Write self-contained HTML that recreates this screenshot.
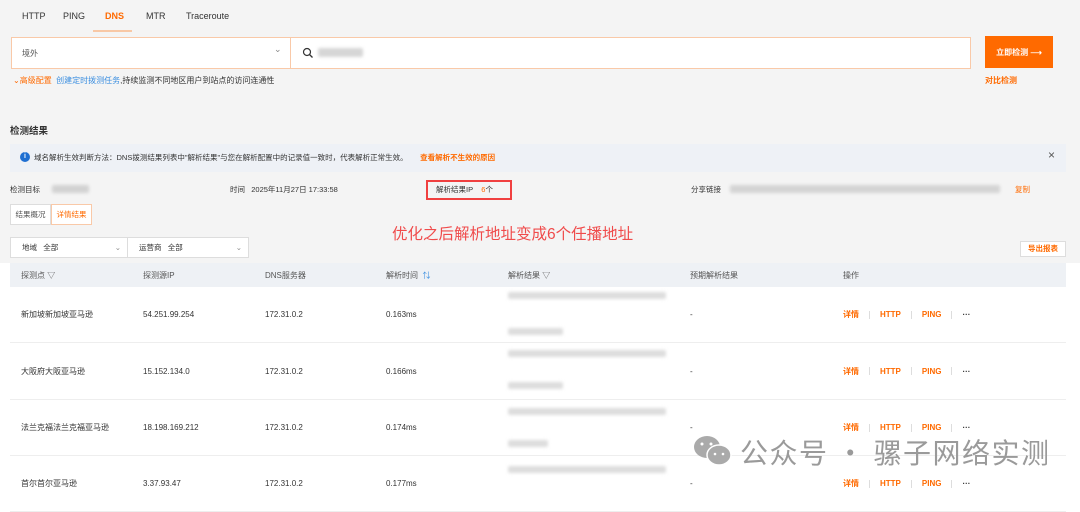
<!DOCTYPE html>
<html><head><meta charset="utf-8"><style>
*{margin:0;padding:0;box-sizing:border-box}
body{width:1080px;height:493px;overflow:hidden;background:#fff;font-family:"Liberation Sans","Noto Sans CJK SC",sans-serif;font-size:8px;color:#333;position:relative}
.a{position:absolute;white-space:nowrap}
.top{position:absolute;left:0;top:0;width:1080px;height:263px;background:#f4f4f4}
.blur{position:absolute;background:#c8c8c8;filter:blur(1.5px);border-radius:2px}
.or{color:#ff6a00}
.row{position:absolute;left:10px;width:1056px;border-bottom:1px solid #eee;background:#fff}
.cell{position:absolute;top:0;height:100%;display:flex;align-items:center;font-size:8px;color:#333}
.cell.act{color:#ff6a00;font-weight:bold}
.sep{display:inline-block;width:1px;height:8px;background:#ddd;margin:0 10px;vertical-align:middle}
</style></head><body>
<div class="top"></div>
<div class="a" style="left:22px;top:11px;font-size:9px">HTTP</div>
<div class="a" style="left:63px;top:11px;font-size:9px">PING</div>
<div class="a or" style="left:105px;top:11px;font-size:9px;font-weight:bold">DNS</div>
<div class="a" style="left:93px;top:30px;width:39px;height:2px;background:#f8c8a6"></div>
<div class="a" style="left:146px;top:11px;font-size:9px">MTR</div>
<div class="a" style="left:186px;top:11px;font-size:9px">Traceroute</div>
<div class="a" style="left:11px;top:37px;width:960px;height:32px;background:#fff;border:1px solid #f9c9a8"></div>
<div class="a" style="left:290px;top:37px;width:1px;height:32px;background:#f9c9a8"></div>
<div class="a" style="left:22px;top:48px;font-size:8px;color:#555">境外</div>
<div class="a" style="left:274px;top:44px;font-size:9px;color:#888">&#8964;</div>
<svg class="a" style="left:302px;top:47px" width="12" height="12"><circle cx="5" cy="5" r="3.5" fill="none" stroke="#333" stroke-width="1.2"/><line x1="7.5" y1="7.5" x2="10.5" y2="10.5" stroke="#333" stroke-width="1.3"/></svg>
<div class="blur" style="left:318px;top:48px;width:45px;height:9px;background:#d6d6d6"></div>
<div class="a" style="left:985px;top:36px;width:68px;height:32px;background:#ff6a00;color:#fff;font-size:8px;font-weight:bold;display:flex;align-items:center;justify-content:center">立即检测 ⟶</div>
<div class="a or" style="left:985px;top:75px;font-size:8px;font-weight:bold">对比检测</div>
<div class="a" style="left:13px;top:75px;font-size:8px"><span class="or">⌄高级配置</span> &nbsp;<span style="color:#3c8fe0">创建定时拨测任务</span>,持续监测不同地区用户到站点的访问连通性</div>
<div class="a" style="left:10px;top:123px;font-size:9.5px;font-weight:bold">检测结果</div>
<div class="a" style="left:10px;top:144px;width:1056px;height:28px;background:#eef1f6"></div>
<div class="a" style="left:20px;top:152px;width:10px;height:10px;border-radius:50%;background:#1f6fd1;color:#fff;font-size:7px;font-weight:bold;text-align:center;line-height:10px">i</div>
<div class="a" style="left:34px;top:152px;font-size:7.5px">域名解析生效判断方法：DNS拨测结果列表中"解析结果"与您在解析配置中的记录值一致时，代表解析正常生效。 &nbsp; &nbsp; &nbsp;<span class="or" style="font-weight:bold">查看解析不生效的原因</span></div>
<div class="a" style="left:1048px;top:148px;font-size:12px;color:#555">×</div>
<div class="a" style="left:10px;top:184px;font-size:7.5px">检测目标</div>
<div class="blur" style="left:52px;top:185px;width:37px;height:8px;background:#d2d2d2"></div>
<div class="a" style="left:230px;top:184px;font-size:7.5px">时间 &nbsp; 2025年11月27日 17:33:58</div>
<div class="a" style="left:426px;top:180px;width:86px;height:20px;border:2px solid #f04040"></div>
<div class="a" style="left:436px;top:184px;font-size:7.5px">解析结果IP &nbsp; &nbsp;<span class="or">6</span>个</div>
<div class="a" style="left:691px;top:184px;font-size:7.5px">分享链接</div>
<div class="blur" style="left:730px;top:185px;width:270px;height:8px;background:#d4d4d4"></div>
<div class="a or" style="left:1015px;top:184px;font-size:7.5px">复制</div>
<div class="a" style="left:10px;top:204px;width:41px;height:21px;background:#fff;border:1px solid #ddd;font-size:7.5px;text-align:center;line-height:19px;color:#555">结果概况</div>
<div class="a or" style="left:51px;top:204px;width:41px;height:21px;background:#fff;border:1px solid #f9c9a8;font-size:7.5px;text-align:center;line-height:19px">详情结果</div>
<div class="a" style="left:392px;top:222px;font-size:15.5px;color:#f04b4b">优化之后解析地址变成6个任播地址</div>
<div class="a" style="left:10px;top:237px;width:118px;height:21px;background:#fff;border:1px solid #ddd;font-size:7.5px;padding-left:11px;line-height:19px">地域 &nbsp; 全部<span style="position:absolute;right:6px;color:#888">⌄</span></div>
<div class="a" style="left:127px;top:237px;width:122px;height:21px;background:#fff;border:1px solid #ddd;font-size:7.5px;padding-left:11px;line-height:19px">运营商 &nbsp; 全部<span style="position:absolute;right:6px;color:#888">⌄</span></div>
<div class="a or" style="left:1020px;top:241px;width:46px;height:16px;background:#fff;border:1px solid #ddd;font-size:7.5px;font-weight:bold;text-align:center;line-height:14px">导出报表</div>
<div class="row" style="top:263px;height:24px;background:#eef1f5;border:none">
<div class="cell" style="left:11px;color:#555">探测点 ▽</div><div class="cell" style="left:133px;color:#555">探测源IP</div><div class="cell" style="left:255px;color:#555">DNS服务器</div><div class="cell" style="left:376px;color:#555">解析时间 &nbsp;<span style="color:#3c8fe0">⇅</span></div><div class="cell" style="left:498px;color:#555">解析结果 ▽</div><div class="cell" style="left:680px;color:#555">预期解析结果</div><div class="cell" style="left:833px;color:#555">操作</div></div>
<div class="row" style="top:287px;height:56px"><div class="cell" style="left:11px">新加坡新加坡亚马逊</div><div class="cell" style="left:133px">54.251.99.254</div><div class="cell" style="left:255px">172.31.0.2</div><div class="cell" style="left:376px">0.163ms</div><div class="cell" style="left:680px">-</div><div class="cell act" style="left:833px">详情<span class="sep"></span>HTTP<span class="sep"></span>PING<span class="sep"></span><span style="color:#333">···</span></div></div>
<div class="row" style="top:343px;height:57px"><div class="cell" style="left:11px">大阪府大阪亚马逊</div><div class="cell" style="left:133px">15.152.134.0</div><div class="cell" style="left:255px">172.31.0.2</div><div class="cell" style="left:376px">0.166ms</div><div class="cell" style="left:680px">-</div><div class="cell act" style="left:833px">详情<span class="sep"></span>HTTP<span class="sep"></span>PING<span class="sep"></span><span style="color:#333">···</span></div></div>
<div class="row" style="top:400px;height:56px"><div class="cell" style="left:11px">法兰克福法兰克福亚马逊</div><div class="cell" style="left:133px">18.198.169.212</div><div class="cell" style="left:255px">172.31.0.2</div><div class="cell" style="left:376px">0.174ms</div><div class="cell" style="left:680px">-</div><div class="cell act" style="left:833px">详情<span class="sep"></span>HTTP<span class="sep"></span>PING<span class="sep"></span><span style="color:#333">···</span></div></div>
<div class="row" style="top:456px;height:56px"><div class="cell" style="left:11px">首尔首尔亚马逊</div><div class="cell" style="left:133px">3.37.93.47</div><div class="cell" style="left:255px">172.31.0.2</div><div class="cell" style="left:376px">0.177ms</div><div class="cell" style="left:680px">-</div><div class="cell act" style="left:833px">详情<span class="sep"></span>HTTP<span class="sep"></span>PING<span class="sep"></span><span style="color:#333">···</span></div></div>
<div class="blur" style="left:508px;top:292px;width:158px;height:7px;background:#ddd"></div>
<div class="blur" style="left:508px;top:328px;width:55px;height:7px;background:#ddd"></div>
<div class="blur" style="left:508px;top:350px;width:158px;height:7px;background:#ddd"></div>
<div class="blur" style="left:508px;top:382px;width:55px;height:7px;background:#ddd"></div>
<div class="blur" style="left:508px;top:408px;width:158px;height:7px;background:#ddd"></div>
<div class="blur" style="left:508px;top:440px;width:40px;height:7px;background:#ddd"></div>
<div class="blur" style="left:508px;top:466px;width:158px;height:7px;background:#ddd"></div>
<svg class="a" style="left:692px;top:433px" width="42" height="36"><ellipse cx="15" cy="14" rx="13" ry="11" fill="#aaa"/><ellipse cx="27" cy="22" rx="12" ry="10" fill="#aaa" stroke="#fff" stroke-width="1.5"/><circle cx="10" cy="11" r="1.5" fill="#fff"/><circle cx="19" cy="11" r="1.5" fill="#fff"/><circle cx="23" cy="21" r="1.3" fill="#fff"/><circle cx="31" cy="21" r="1.3" fill="#fff"/></svg>
<div class="a" style="left:740px;top:432px;font-size:28px;color:#9a9a9a;font-family:'Noto Sans CJK SC',sans-serif;letter-spacing:1.5px">公众号 · 骡子网络实测</div>
</body></html>
